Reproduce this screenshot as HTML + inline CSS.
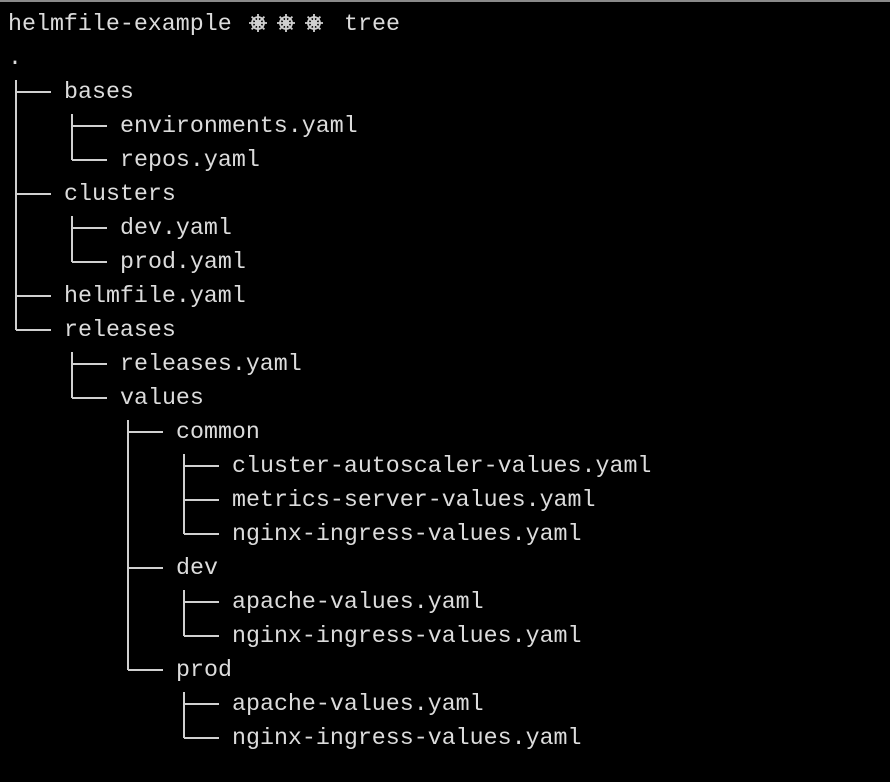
<!DOCTYPE html>
<html><head><meta charset="utf-8"><style>
html,body{margin:0;padding:0;background:#000;width:890px;height:782px;overflow:hidden}
.top{position:absolute;left:0;top:0;width:890px;height:2px;background:#8a8a8a}
.t{position:absolute;font-family:"Liberation Mono","DejaVu Sans Mono",monospace;font-size:23.3px;line-height:34px;color:#dcdcdc;white-space:pre}
svg{position:absolute;left:0;top:0}
</style></head><body>
<div class="top"></div>
<svg width="890" height="782">
<g stroke="#d0d0d0" stroke-width="2" fill="none">
<line x1="16" y1="80" x2="16" y2="330"/>
<line x1="72" y1="114" x2="72" y2="160"/>
<line x1="72" y1="216" x2="72" y2="262"/>
<line x1="72" y1="352" x2="72" y2="398"/>
<line x1="128" y1="420" x2="128" y2="670"/>
<line x1="184" y1="454" x2="184" y2="534"/>
<line x1="184" y1="590" x2="184" y2="636"/>
<line x1="184" y1="692" x2="184" y2="738"/>
<line x1="16" y1="92" x2="51" y2="92"/>
<line x1="16" y1="194" x2="51" y2="194"/>
<line x1="16" y1="296" x2="51" y2="296"/>
<line x1="16" y1="330" x2="51" y2="330"/>
<line x1="72" y1="126" x2="107" y2="126"/>
<line x1="72" y1="160" x2="107" y2="160"/>
<line x1="72" y1="228" x2="107" y2="228"/>
<line x1="72" y1="262" x2="107" y2="262"/>
<line x1="72" y1="364" x2="107" y2="364"/>
<line x1="72" y1="398" x2="107" y2="398"/>
<line x1="128" y1="432" x2="163" y2="432"/>
<line x1="128" y1="568" x2="163" y2="568"/>
<line x1="128" y1="670" x2="163" y2="670"/>
<line x1="184" y1="466" x2="219" y2="466"/>
<line x1="184" y1="500" x2="219" y2="500"/>
<line x1="184" y1="534" x2="219" y2="534"/>
<line x1="184" y1="602" x2="219" y2="602"/>
<line x1="184" y1="636" x2="219" y2="636"/>
<line x1="184" y1="704" x2="219" y2="704"/>
<line x1="184" y1="738" x2="219" y2="738"/>
</g>
<g stroke="#d0d0d0" stroke-width="1.8" fill="none">
<g transform="translate(258,23)"><circle r="6"/><circle r="2.5"/><path d="M0-9V9M-9 0H9M-6.4-6.4L6.4 6.4M6.4-6.4L-6.4 6.4"/></g>
<g transform="translate(286,23)"><circle r="6"/><circle r="2.5"/><path d="M0-9V9M-9 0H9M-6.4-6.4L6.4 6.4M6.4-6.4L-6.4 6.4"/></g>
<g transform="translate(314,23)"><circle r="6"/><circle r="2.5"/><path d="M0-9V9M-9 0H9M-6.4-6.4L6.4 6.4M6.4-6.4L-6.4 6.4"/></g>
</g>
</svg>
<div class="t" style="left:8px;top:7px">helmfile-example</div>
<div class="t" style="left:344px;top:7px">tree</div>
<div class="t" style="left:8px;top:41px">.</div>
<div class="t" style="left:64px;top:75px">bases</div>
<div class="t" style="left:120px;top:109px">environments.yaml</div>
<div class="t" style="left:120px;top:143px">repos.yaml</div>
<div class="t" style="left:64px;top:177px">clusters</div>
<div class="t" style="left:120px;top:211px">dev.yaml</div>
<div class="t" style="left:120px;top:245px">prod.yaml</div>
<div class="t" style="left:64px;top:279px">helmfile.yaml</div>
<div class="t" style="left:64px;top:313px">releases</div>
<div class="t" style="left:120px;top:347px">releases.yaml</div>
<div class="t" style="left:120px;top:381px">values</div>
<div class="t" style="left:176px;top:415px">common</div>
<div class="t" style="left:232px;top:449px">cluster-autoscaler-values.yaml</div>
<div class="t" style="left:232px;top:483px">metrics-server-values.yaml</div>
<div class="t" style="left:232px;top:517px">nginx-ingress-values.yaml</div>
<div class="t" style="left:176px;top:551px">dev</div>
<div class="t" style="left:232px;top:585px">apache-values.yaml</div>
<div class="t" style="left:232px;top:619px">nginx-ingress-values.yaml</div>
<div class="t" style="left:176px;top:653px">prod</div>
<div class="t" style="left:232px;top:687px">apache-values.yaml</div>
<div class="t" style="left:232px;top:721px">nginx-ingress-values.yaml</div>
</body></html>
